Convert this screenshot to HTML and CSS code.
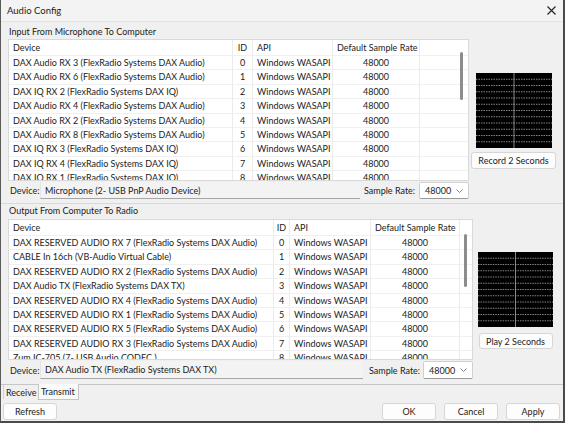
FILE: index.html
```html
<!DOCTYPE html>
<html>
<head>
<meta charset="utf-8">
<title>Audio Config</title>
<link rel="stylesheet" href="styles.css">
</head>
<body>
<div class="window">
  <div class="titlebar">
    <span class="title">Audio Config</span>
    <svg class="close" width="9" height="9" viewBox="0 0 9 9"><path d="M0.5 0.5 L8.5 8.5 M8.5 0.5 L0.5 8.5" stroke="#222" stroke-width="1.1" fill="none"/></svg>
  </div>
  <div class="page">
    <div class="group-title">Input From Microphone To Computer</div>
    <div class="group-body">
      <div class="left left-in">
        <div class="list list-in">
          <div class="grid grid-in">
            <div class="row head"><span class="c dev">Device</span><span class="c id">ID</span><span class="c api">API</span><span class="c rate hd">Default Sample Rate</span><span class="c fill"></span></div>
            <div class="row"><span class="c dev">DAX Audio RX 3 (FlexRadio Systems DAX Audio)</span><span class="c id">0</span><span class="c api">Windows WASAPI</span><span class="c rate">48000</span><span class="c fill"></span></div>
            <div class="row"><span class="c dev">DAX Audio RX 6 (FlexRadio Systems DAX Audio)</span><span class="c id">1</span><span class="c api">Windows WASAPI</span><span class="c rate">48000</span><span class="c fill"></span></div>
            <div class="row"><span class="c dev">DAX IQ RX 2 (FlexRadio Systems DAX IQ)</span><span class="c id">2</span><span class="c api">Windows WASAPI</span><span class="c rate">48000</span><span class="c fill"></span></div>
            <div class="row"><span class="c dev">DAX Audio RX 4 (FlexRadio Systems DAX Audio)</span><span class="c id">3</span><span class="c api">Windows WASAPI</span><span class="c rate">48000</span><span class="c fill"></span></div>
            <div class="row"><span class="c dev">DAX Audio RX 2 (FlexRadio Systems DAX Audio)</span><span class="c id">4</span><span class="c api">Windows WASAPI</span><span class="c rate">48000</span><span class="c fill"></span></div>
            <div class="row"><span class="c dev">DAX Audio RX 8 (FlexRadio Systems DAX Audio)</span><span class="c id">5</span><span class="c api">Windows WASAPI</span><span class="c rate">48000</span><span class="c fill"></span></div>
            <div class="row"><span class="c dev">DAX IQ RX 3 (FlexRadio Systems DAX IQ)</span><span class="c id">6</span><span class="c api">Windows WASAPI</span><span class="c rate">48000</span><span class="c fill"></span></div>
            <div class="row"><span class="c dev">DAX IQ RX 4 (FlexRadio Systems DAX IQ)</span><span class="c id">7</span><span class="c api">Windows WASAPI</span><span class="c rate">48000</span><span class="c fill"></span></div>
            <div class="row"><span class="c dev">DAX IQ RX 1 (FlexRadio Systems DAX IQ)</span><span class="c id">8</span><span class="c api">Windows WASAPI</span><span class="c rate">48000</span><span class="c fill"></span></div>
          </div>
          <div class="scrollbar sb-in"></div>
        </div>
        <div class="devrow dev-in">
          <span class="lbl">Device:</span>
          <span class="field">Microphone (2- USB PnP Audio Device)</span>
          <span class="lbl2">Sample Rate:</span>
          <span class="combo"><span>48000</span><svg width="7" height="4" viewBox="0 0 7 4"><path d="M0.5 0.5 L3.5 3.5 L6.5 0.5" stroke="#777" stroke-width="0.9" fill="none"/></svg></span>
        </div>
      </div>
      <div class="side side-in">
        <svg class="scope" width="76" height="75" viewBox="0 0 76 75">
          <rect width="76" height="75" fill="#000"/>
          <g stroke="#a8a8a8" stroke-width="0.8" stroke-dasharray="1.5 1">
            <line x1="0" y1="6.25" x2="76" y2="6.25"/><line x1="0" y1="12.5" x2="76" y2="12.5"/><line x1="0" y1="18.75" x2="76" y2="18.75"/><line x1="0" y1="25" x2="76" y2="25"/><line x1="0" y1="31.25" x2="76" y2="31.25"/><line x1="0" y1="37.5" x2="76" y2="37.5"/><line x1="0" y1="43.75" x2="76" y2="43.75"/><line x1="0" y1="50" x2="76" y2="50"/><line x1="0" y1="56.25" x2="76" y2="56.25"/><line x1="0" y1="62.5" x2="76" y2="62.5"/><line x1="0" y1="68.75" x2="76" y2="68.75"/>
          </g>
          <line x1="38" y1="0" x2="38" y2="75" stroke="#a8a8a8" stroke-width="0.8"/>
        </svg>
        <button class="btn btn-rec">Record 2 Seconds</button>
      </div>
    </div>
    <div class="divider"></div>
    <div class="group-title gt2">Output From Computer To Radio</div>
    <div class="group-body">
      <div class="left left-out">
        <div class="list list-out">
          <div class="grid grid-out">
            <div class="row head"><span class="c dev">Device</span><span class="c id">ID</span><span class="c api">API</span><span class="c rate hd">Default Sample Rate</span><span class="c fill"></span></div>
            <div class="row"><span class="c dev">DAX RESERVED AUDIO RX 7 (FlexRadio Systems DAX Audio)</span><span class="c id">0</span><span class="c api">Windows WASAPI</span><span class="c rate">48000</span><span class="c fill"></span></div>
            <div class="row"><span class="c dev">CABLE In 16ch (VB-Audio Virtual Cable)</span><span class="c id">1</span><span class="c api">Windows WASAPI</span><span class="c rate">48000</span><span class="c fill"></span></div>
            <div class="row"><span class="c dev">DAX RESERVED AUDIO RX 2 (FlexRadio Systems DAX Audio)</span><span class="c id">2</span><span class="c api">Windows WASAPI</span><span class="c rate">48000</span><span class="c fill"></span></div>
            <div class="row"><span class="c dev">DAX Audio TX (FlexRadio Systems DAX TX)</span><span class="c id">3</span><span class="c api">Windows WASAPI</span><span class="c rate">48000</span><span class="c fill"></span></div>
            <div class="row"><span class="c dev">DAX RESERVED AUDIO RX 4 (FlexRadio Systems DAX Audio)</span><span class="c id">4</span><span class="c api">Windows WASAPI</span><span class="c rate">48000</span><span class="c fill"></span></div>
            <div class="row"><span class="c dev">DAX RESERVED AUDIO RX 1 (FlexRadio Systems DAX Audio)</span><span class="c id">5</span><span class="c api">Windows WASAPI</span><span class="c rate">48000</span><span class="c fill"></span></div>
            <div class="row"><span class="c dev">DAX RESERVED AUDIO RX 5 (FlexRadio Systems DAX Audio)</span><span class="c id">6</span><span class="c api">Windows WASAPI</span><span class="c rate">48000</span><span class="c fill"></span></div>
            <div class="row"><span class="c dev">DAX RESERVED AUDIO RX 3 (FlexRadio Systems DAX Audio)</span><span class="c id">7</span><span class="c api">Windows WASAPI</span><span class="c rate">48000</span><span class="c fill"></span></div>
            <div class="row"><span class="c dev">Zum IC-705 (7- USB Audio CODEC )</span><span class="c id">8</span><span class="c api">Windows WASAPI</span><span class="c rate">48000</span><span class="c fill"></span></div>
          </div>
          <div class="scrollbar sb-out"></div>
        </div>
        <div class="devrow dev-out">
          <span class="lbl">Device:</span>
          <span class="field">DAX Audio TX (FlexRadio Systems DAX TX)</span>
          <span class="lbl2">Sample Rate:</span>
          <span class="combo"><span>48000</span><svg width="7" height="4" viewBox="0 0 7 4"><path d="M0.5 0.5 L3.5 3.5 L6.5 0.5" stroke="#777" stroke-width="0.9" fill="none"/></svg></span>
        </div>
      </div>
      <div class="side side-out">
        <svg class="scope" width="75" height="75" viewBox="0 0 76 75" preserveAspectRatio="none">
          <rect width="76" height="75" fill="#000"/>
          <g stroke="#a8a8a8" stroke-width="0.8" stroke-dasharray="1.5 1">
            <line x1="0" y1="6.25" x2="76" y2="6.25"/><line x1="0" y1="12.5" x2="76" y2="12.5"/><line x1="0" y1="18.75" x2="76" y2="18.75"/><line x1="0" y1="25" x2="76" y2="25"/><line x1="0" y1="31.25" x2="76" y2="31.25"/><line x1="0" y1="37.5" x2="76" y2="37.5"/><line x1="0" y1="43.75" x2="76" y2="43.75"/><line x1="0" y1="50" x2="76" y2="50"/><line x1="0" y1="56.25" x2="76" y2="56.25"/><line x1="0" y1="62.5" x2="76" y2="62.5"/><line x1="0" y1="68.75" x2="76" y2="68.75"/>
          </g>
          <line x1="38" y1="0" x2="38" y2="75" stroke="#a8a8a8" stroke-width="0.8"/>
        </svg>
        <button class="btn btn-play">Play 2 Seconds</button>
      </div>
    </div>
  </div>
  <div class="tabs">
    <span class="tab">Receive</span>
    <span class="tab active">Transmit</span>
  </div>
  <div class="footer">
    <button class="btn fbtn">Refresh</button>
    <span class="spacer"></span>
    <button class="btn fbtn">OK</button>
    <button class="btn fbtn">Cancel</button>
    <button class="btn fbtn">Apply</button>
  </div>
</div>
</body>
</html>
```
FILE: styles.css
```css
* { box-sizing: border-box; }
html, body { margin: 0; padding: 0; }
body {
  width: 565px;
  height: 423px;
  overflow: hidden;
  font-family: Lato, "Noto Sans", sans-serif;
  font-size: 9px;
  color: #1b1b1b;
  background: #f0f0f0;
}
.window {
  width: 565px;
  height: 423px;
  display: flex;
  flex-direction: column;
  background: #f0f0f0;
  border-left: 1px solid #5a5a5a;
  border-right: 2px solid #4a4a4a;
  border-bottom: 2px solid #4a4a4a;
}
.titlebar {
  flex: none;
  height: 22px;
  display: flex;
  align-items: center;
  justify-content: space-between;
  padding: 0 7px 0 6px;
  background: #f3f3f3;
  border-bottom: 1px solid #e3e3e3;
  font-size: 9.5px;
}
.page {
  flex: none;
  height: 362px;
  padding: 3px 5px 0 7px;
  display: flex;
  flex-direction: column;
}
.group-title {
  height: 14px;
  line-height: 14px;
  padding-left: 1px;
  white-space: nowrap;
}
.gt2 { height: 15px; }
.group-body {
  display: flex;
  flex-direction: row;
}
.left { display: flex; flex-direction: column; }
.left-in { width: 461px; }
.left-out { width: 465px; }
.list {
  position: relative;
  background: #fff;
  border: 1px solid #d9d9d9;
  overflow: hidden;
}
.list-in { height: 142px; }
.list-out { height: 141px; }
.grid { display: flex; flex-direction: column; }
.row {
  display: grid;
  height: 14.4px;
  line-height: 14px;
  flex: none;
  white-space: nowrap;
}
.row.head { height: 16px; line-height: 15px; }
.grid-in .row { grid-template-columns: 224px 20px 80px 87px 1fr; }
.grid-out .row { grid-template-columns: 265px 16px 81px 89px 1fr; }
.c {
  border-right: 1px solid #ebebeb;
  border-bottom: 1px solid #f0f0f0;
  overflow: hidden;
}
.c.fill { border-right: none; }
.dev, .api { padding-left: 4px; }
.id { text-align: center; }
.rate { text-align: center; }
.rate.hd { text-align: left; padding-left: 4px; }
.scrollbar {
  position: absolute;
  width: 3px;
  border-radius: 2px;
  background: #8c8c8c;
}
.sb-in { left: 451px; top: 12px; height: 48px; }
.sb-out { left: 455px; top: 14px; height: 53px; }
.devrow {
  display: flex;
  align-items: center;
  margin-top: 1px;
  white-space: nowrap;
}
.dev-in { height: 17px; }
.dev-out { height: 18px; }
.lbl { width: 32px; padding-left: 2px; flex: none; }
.field {
  flex: 1;
  height: 100%;
  padding-left: 4px;
  display: flex;
  align-items: center;
  background: #f3f3f3;
  border-left: 1px solid #e4e4e4;
  border-bottom: 1px solid #a6a6a6;
}
.lbl2 { flex: none; }
.dev-in .lbl2 { margin-left: 4px; width: 55px; }
.dev-out .lbl2 { margin-left: 6px; width: 54px; }
.combo {
  flex: none;
  width: 50px;
  height: 100%;
  display: flex;
  align-items: center;
  justify-content: space-between;
  padding: 0 5px 0 5px;
  background: #fff;
  border: 1px solid #d0d0d0;
  border-bottom-color: #9a9a9a;
  border-radius: 2px;
}
.side {
  display: flex;
  flex-direction: column;
  align-items: center;
}
.side-in { width: 89px; padding-top: 34px; }
.side-out { width: 85px; padding-top: 33px; }
.scope { display: block; flex: none; }
.btn {
  font-family: inherit;
  font-size: 9px;
  color: #1b1b1b;
  background: #fdfdfd;
  border: 1px solid #d6d6d6;
  border-radius: 3px;
  padding: 0;
  margin: 0;
  white-space: nowrap;
}
.btn-rec { width: 85px; height: 17px; margin-top: 4px; }
.btn-play { width: 74px; height: 16px; margin-top: 6px; }
.divider {
  height: 1px;
  margin: 4px -5px 0 -7px;
  background: #d8d8d8;
}
.tabs {
  flex: none;
  height: 16px;
  display: flex;
  align-items: stretch;
  padding-left: 2px;
  border-top: 1px solid #c6c6c6;
}
.tab {
  display: flex;
  align-items: center;
  justify-content: flex-start;
  padding-left: 2px;
  width: 35px;
  height: 14px;
  border-left: 1px solid #d0d0d0;
}
.tab.active {
  width: 41px;
  height: 16px;
  margin-top: -1px;
  padding-left: 2px;
  background: #fafafa;
  border: 1px solid #c4c4c4;
  border-top: none;
}
.footer {
  flex: none;
  height: 21px;
  display: flex;
  align-items: flex-start;
  padding: 3px 3px 0 2px;
  gap: 8px;
}
.spacer { flex: 1; }
.fbtn { width: 54px; height: 17px; }
```
